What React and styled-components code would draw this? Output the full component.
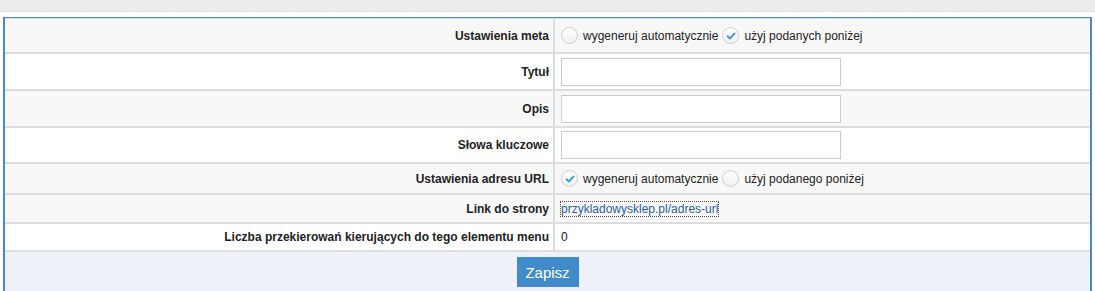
import React from 'react';
import styled, { createGlobalStyle } from 'styled-components';

const GlobalStyle = createGlobalStyle`
    html, body {
        margin: 0;
        padding: 0;
        background: #ffffff;
    }

    body {
        font-family: "Liberation Sans", Arial, sans-serif;
        font-size: 12px;
        color: #222222;
    }
`;

const TopBar = styled.div`
    height: 11px;
    background-color: #ececec;
    border-bottom: 1px dashed #dcdcdc;
`;

const Page = styled.div`
    padding: 5px 3px 0 3px;
`;

const Panel = styled.div`
    border-top: 1px solid #4a89c8;
    border-left: 2px solid #4a89c8;
    border-right: 2px solid #4a89c8;
`;

const Table = styled.div`
    border-top: 1px solid #dddddd;
`;

const Row = styled.div`
    box-sizing: border-box;
    display: grid;
    grid-template-columns: 548px 2px 1fr;
    height: ${props => props.height}px;

    background-color: ${props => props.striped ? '#f8f8f8' : '#ffffff'};
    border-bottom: 2px solid #dddddd;
`;

const Label = styled.div`
    display: flex;
    justify-content: flex-end;
    align-items: center;

    padding-right: 4px;

    font-weight: bold;
    white-space: nowrap;
`;

const Divider = styled.div`
    background-color: #dddddd;
`;

const Value = styled.div`
    display: flex;
    align-items: center;

    padding-left: 6px;
`;

const Input = styled.input`
    box-sizing: border-box;
    width: 280px;
    height: 28px;
    margin: 0;

    border: 1px solid #cccccc;
    background: #ffffff;
`;

const Choice = styled.label`
    display: flex;
    align-items: center;
    gap: 5px;

    margin-right: 4px;
`;

const Radio = styled.span`
    box-sizing: border-box;
    width: 17px;
    height: 17px;

    display: flex;
    justify-content: center;
    align-items: center;

    border: 1px solid #cdcdcd;
    border-radius: 50%;
    background: linear-gradient(#ffffff, #f1f1f1);
`;

const UrlLink = styled.a`
    color: #2b5f9c;
    text-decoration: none;
    outline: 1px dotted #555555;
    outline-offset: 0;
`;

const Footer = styled.div`
    height: 40px;
    display: flex;
    justify-content: center;
    align-items: flex-start;

    padding-top: 5px;
    background-color: #eef1f8;
`;

const Button = styled.button`
    width: 62px;
    height: 30px;

    border: none;
    background-color: #428bca;
    color: #ffffff;

    font-family: "Liberation Sans", Arial, sans-serif;
    font-size: 15px;
`;

const Check = () => (
    <svg width="10" height="10" viewBox="0 0 10 10">
        <path d="M1.6 5.2 L4 7.4 L8.4 2.6" fill="none" stroke="#3a9ad9" strokeWidth="2" strokeLinecap="round" strokeLinejoin="round" />
    </svg>
);

const RadioOption = ({ checked, children }) => (
    <Choice>
        <Radio>{checked && <Check />}</Radio>
        {children}
    </Choice>
);

const FormRow = ({ label, height, striped, children }) => (
    <Row height={height} striped={striped}>
        <Label>{label}</Label>
        <Divider />
        <Value>{children}</Value>
    </Row>
);

const App = () => (
    <>
        <GlobalStyle />
        <TopBar />
        <Page>
            <Panel>
                <Table>
                    <FormRow label="Ustawienia meta" height={35} striped>
                        <RadioOption>wygeneruj automatycznie</RadioOption>
                        <RadioOption checked>użyj podanych poniżej</RadioOption>
                    </FormRow>
                    <FormRow label="Tytuł" height={37}>
                        <Input type="text" />
                    </FormRow>
                    <FormRow label="Opis" height={37} striped>
                        <Input type="text" />
                    </FormRow>
                    <FormRow label="Słowa kluczowe" height={36}>
                        <Input type="text" />
                    </FormRow>
                    <FormRow label="Ustawienia adresu URL" height={31} striped>
                        <RadioOption checked>wygeneruj automatycznie</RadioOption>
                        <RadioOption>użyj podanego poniżej</RadioOption>
                    </FormRow>
                    <FormRow label="Link do strony" height={29} striped>
                        <UrlLink href="#">przykladowysklep.pl/adres-url</UrlLink>
                    </FormRow>
                    <FormRow label="Liczba przekierowań kierujących do tego elementu menu" height={28}>
                        0
                    </FormRow>
                </Table>
                <Footer>
                    <Button>Zapisz</Button>
                </Footer>
            </Panel>
        </Page>
    </>
);

export default App;
